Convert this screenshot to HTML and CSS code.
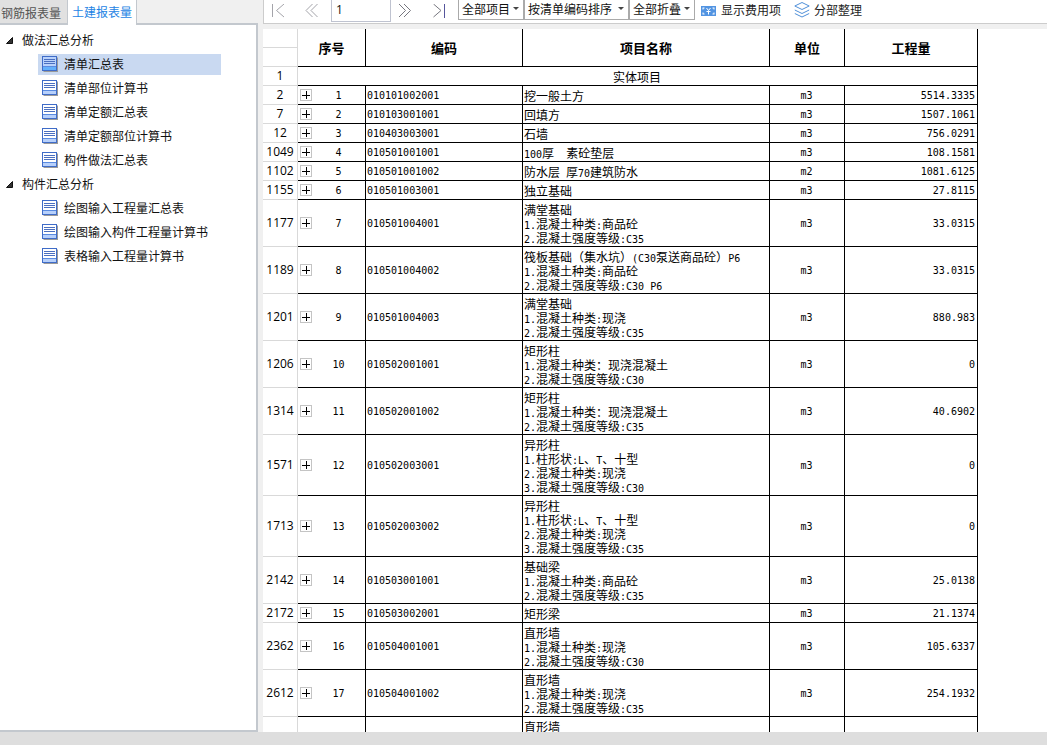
FILE: index.html
```html
<!DOCTYPE html>
<html lang="zh-CN">
<head>
<meta charset="utf-8">
<title>土建报表量</title>
<link rel="stylesheet" href="styles.css">
</head>
<body>
<svg class="defs" aria-hidden="true">
  <symbol id="sheet" viewBox="0 0 16 16">
    <path d="M15 1.500h1V16H1.500v-1H15z" fill="#9a9a9a"/>
    <rect x=".5" y=".5" width="14" height="14" class="sheet-body"/>
    <rect x="1" y="11" width="13" height="3" class="sheet-foot"/>
    <path d="M2 3.500h11M2 5.500h11M2 7.500h11" stroke="#4a6fc0" fill="none"/>
    <path d="M1 10.500h13" stroke="#5a8be0" fill="none"/>
  </symbol>
</svg>
<div class="app">
  <div class="workspace">
    <aside class="sidebar">
      <div class="tabs" role="tablist">
        <button class="tab" role="tab" aria-selected="false">钢筋报表量</button>
        <button class="tab tab-active" role="tab" aria-selected="true">土建报表量</button>
      </div>
      <nav class="tree">
        <button class="group"><svg class="arrow" viewBox="0 0 7 7"><path d="M6.500.5v6H.5z"/></svg>做法汇总分析</button>
        <ul class="items">
          <li><a class="item item-current" href="#"><svg class="sheet"><use href="#sheet"/></svg>清单汇总表</a></li>
          <li><a class="item" href="#"><svg class="sheet"><use href="#sheet"/></svg>清单部位计算书</a></li>
          <li><a class="item" href="#"><svg class="sheet"><use href="#sheet"/></svg>清单定额汇总表</a></li>
          <li><a class="item" href="#"><svg class="sheet"><use href="#sheet"/></svg>清单定额部位计算书</a></li>
          <li><a class="item" href="#"><svg class="sheet"><use href="#sheet"/></svg>构件做法汇总表</a></li>
        </ul>
        <button class="group"><svg class="arrow" viewBox="0 0 7 7"><path d="M6.500.5v6H.5z"/></svg>构件汇总分析</button>
        <ul class="items">
          <li><a class="item" href="#"><svg class="sheet"><use href="#sheet"/></svg>绘图输入工程量汇总表</a></li>
          <li><a class="item" href="#"><svg class="sheet"><use href="#sheet"/></svg>绘图输入构件工程量计算书</a></li>
          <li><a class="item" href="#"><svg class="sheet"><use href="#sheet"/></svg>表格输入工程量计算书</a></li>
        </ul>
      </nav>
    </aside>
    <main class="main">
      <div class="toolbar">
        <div class="pager">
          <button class="nav nav-off" aria-label="首页"><svg viewBox="0 0 14 14"><path d="M1.500 0v13M13 0L5.500 6.500 13 13"/></svg></button>
          <button class="nav nav-off" aria-label="上一页"><svg viewBox="0 0 14 14"><path d="M7.500 0L1 6.500 7.500 13M12.500 0L6 6.500l6.500 6.500"/></svg></button>
          <input class="page" type="text" value="1" aria-label="页码">
          <button class="nav" aria-label="下一页"><svg viewBox="0 0 14 14"><path d="M1 0l6.500 6.500L1 13M6 0l6.500 6.500L6 13"/></svg></button>
          <button class="nav" aria-label="末页"><svg viewBox="0 0 14 14"><path d="M1.500 0L9 6.500 1.500 13"/><path class="bar" d="M12.500 0v14"/></svg></button>
        </div>
        <div class="filters">
          <span class="drop"><select aria-label="项目范围"><option>全部项目</option></select></span>
          <span class="drop drop-wide"><select aria-label="排序方式"><option>按清单编码排序</option></select></span>
          <span class="drop"><select aria-label="折叠方式"><option>全部折叠</option></select></span>
        </div>
        <button class="tool"><svg class="tool-icon" viewBox="0 0 16 16"><path fill="#5294e2" d="M0 4h15v10H0z"/><path stroke="#fff" fill="none" d="M5.500 6L7.500 8.500 9.500 6M5.500 9.500h4M7.500 8.500V12.500"/><path fill="#fff" d="M1.500 5.500h2v1h-1v1h-1zM13.500 5.500h-2v1h1v1h1zM1.500 12.500h2v-1h-1v-1h-1zM13.500 12.500h-2v-1h1v-1h1z"/></svg>显示费用项</button>
        <button class="tool"><svg class="tool-icon" viewBox="0 0 16 16"><g fill="none" stroke="#4f8fd8"><path d="M8 .5l7.200 3.500L8 7.500.8 4z"/><path d="M.8 8L8 11.500 15.200 8M.8 11.500L8 15l7.200-3.500"/></g></svg>分部整理</button>
      </div>
      <div class="report">
        <table class="sheet-table">
          <colgroup><col class="c-row"><col class="c-seq"><col class="c-code"><col class="c-name"><col class="c-unit"><col class="c-qty"></colgroup>
          <thead>
            <tr><td class="rh"></td><th rowspan="2">序号</th><th rowspan="2">编码</th><th rowspan="2">项目名称</th><th rowspan="2">单位</th><th rowspan="2">工程量</th></tr>
            <tr><td class="rh"></td></tr>
          </thead>
          <tbody>
            <tr><td class="rh">1</td><td class="section" colspan="5">实体项目</td></tr>
            <tr><td class="rh">2</td><td class="seq"><div><button aria-label="展开"></button><span>1</span></div></td><td class="code">010101002001</td><td class="name">挖一般土方</td><td class="unit">m3</td><td class="qty">5514.3335</td></tr>
            <tr><td class="rh">7</td><td class="seq"><div><button aria-label="展开"></button><span>2</span></div></td><td class="code">010103001001</td><td class="name">回填方</td><td class="unit">m3</td><td class="qty">1507.1061</td></tr>
            <tr><td class="rh">12</td><td class="seq"><div><button aria-label="展开"></button><span>3</span></div></td><td class="code">010403003001</td><td class="name">石墙</td><td class="unit">m3</td><td class="qty">756.0291</td></tr>
            <tr><td class="rh">1049</td><td class="seq"><div><button aria-label="展开"></button><span>4</span></div></td><td class="code">010501001001</td><td class="name"><i>100</i>厚<i>  </i>素砼垫层</td><td class="unit">m3</td><td class="qty">108.1581</td></tr>
            <tr><td class="rh">1102</td><td class="seq"><div><button aria-label="展开"></button><span>5</span></div></td><td class="code">010501001002</td><td class="name">防水层<i> </i>厚<i>70</i>建筑防水</td><td class="unit">m2</td><td class="qty">1081.6125</td></tr>
            <tr><td class="rh">1155</td><td class="seq"><div><button aria-label="展开"></button><span>6</span></div></td><td class="code">010501003001</td><td class="name">独立基础</td><td class="unit">m3</td><td class="qty">27.8115</td></tr>
            <tr><td class="rh">1177</td><td class="seq"><div><button aria-label="展开"></button><span>7</span></div></td><td class="code">010501004001</td><td class="name">满堂基础<br><i>1.</i>混凝土种类<i>:</i>商品砼<br><i>2.</i>混凝土强度等级<i>:C35</i></td><td class="unit">m3</td><td class="qty">33.0315</td></tr>
            <tr><td class="rh">1189</td><td class="seq"><div><button aria-label="展开"></button><span>8</span></div></td><td class="code">010501004002</td><td class="name">筏板基础（集水坑）<i>(C30</i>泵送商品砼）<i>P6</i><br><i>1.</i>混凝土种类<i>:</i>商品砼<br><i>2.</i>混凝土强度等级<i>:C30 P6</i></td><td class="unit">m3</td><td class="qty">33.0315</td></tr>
            <tr><td class="rh">1201</td><td class="seq"><div><button aria-label="展开"></button><span>9</span></div></td><td class="code">010501004003</td><td class="name">满堂基础<br><i>1.</i>混凝土种类<i>:</i>现浇<br><i>2.</i>混凝土强度等级<i>:C35</i></td><td class="unit">m3</td><td class="qty">880.983</td></tr>
            <tr><td class="rh">1206</td><td class="seq"><div><button aria-label="展开"></button><span>10</span></div></td><td class="code">010502001001</td><td class="name">矩形柱<br><i>1.</i>混凝土种类：现浇混凝土<br><i>2.</i>混凝土强度等级<i>:C30</i></td><td class="unit">m3</td><td class="qty">0</td></tr>
            <tr><td class="rh">1314</td><td class="seq"><div><button aria-label="展开"></button><span>11</span></div></td><td class="code">010502001002</td><td class="name">矩形柱<br><i>1.</i>混凝土种类：现浇混凝土<br><i>2.</i>混凝土强度等级<i>:C35</i></td><td class="unit">m3</td><td class="qty">40.6902</td></tr>
            <tr><td class="rh">1571</td><td class="seq"><div><button aria-label="展开"></button><span>12</span></div></td><td class="code">010502003001</td><td class="name">异形柱<br><i>1.</i>柱形状<i>:L</i>、<i>T</i>、十型<br><i>2.</i>混凝土种类<i>:</i>现浇<br><i>3.</i>混凝土强度等级<i>:C30</i></td><td class="unit">m3</td><td class="qty">0</td></tr>
            <tr><td class="rh">1713</td><td class="seq"><div><button aria-label="展开"></button><span>13</span></div></td><td class="code">010502003002</td><td class="name">异形柱<br><i>1.</i>柱形状<i>:L</i>、<i>T</i>、十型<br><i>2.</i>混凝土种类<i>:</i>现浇<br><i>3.</i>混凝土强度等级<i>:C35</i></td><td class="unit">m3</td><td class="qty">0</td></tr>
            <tr><td class="rh">2142</td><td class="seq"><div><button aria-label="展开"></button><span>14</span></div></td><td class="code">010503001001</td><td class="name">基础梁<br><i>1.</i>混凝土种类<i>:</i>商品砼<br><i>2.</i>混凝土强度等级<i>:C35</i></td><td class="unit">m3</td><td class="qty">25.0138</td></tr>
            <tr><td class="rh">2172</td><td class="seq"><div><button aria-label="展开"></button><span>15</span></div></td><td class="code">010503002001</td><td class="name">矩形梁</td><td class="unit">m3</td><td class="qty">21.1374</td></tr>
            <tr><td class="rh">2362</td><td class="seq"><div><button aria-label="展开"></button><span>16</span></div></td><td class="code">010504001001</td><td class="name">直形墙<br><i>1.</i>混凝土种类<i>:</i>现浇<br><i>2.</i>混凝土强度等级<i>:C30</i></td><td class="unit">m3</td><td class="qty">105.6337</td></tr>
            <tr><td class="rh">2612</td><td class="seq"><div><button aria-label="展开"></button><span>17</span></div></td><td class="code">010504001002</td><td class="name">直形墙<br><i>1.</i>混凝土种类<i>:</i>现浇<br><i>2.</i>混凝土强度等级<i>:C35</i></td><td class="unit">m3</td><td class="qty">254.1932</td></tr>
            <tr class="partial"><td class="rh"></td><td></td><td></td><td class="name">直形墙</td><td></td><td></td></tr>
          </tbody>
        </table>
      </div>
    </main>
  </div>
  <footer class="status"></footer>
</div>
</body>
</html>
```
FILE: styles.css
```css
* { box-sizing: border-box; }
body, ul { margin: 0; padding: 0; }
body, button, input, select {
  font: 12px/16px "Noto Sans CJK SC", sans-serif;
  color: #111;
}
button { border: 0; padding: 0; background: none; white-space: nowrap; }
.defs { display: none; }

.app { display: flex; flex-direction: column; height: 100vh; overflow: hidden; background: #f0f0f0; }
.workspace { display: flex; gap: 5px; flex: 1; min-height: 0; }
.status { flex: none; height: 13px; background: #dedede; }

/* sidebar */
.sidebar { display: flex; flex-direction: column; flex: none; width: 258px; }
.tabs { display: flex; flex: none; height: 23px; }
.tab { width: 67px; height: 23px; padding: 2px 0 0 1px; text-align: left; background: #e1e1e1; color: #555; }
.tab-active {
  position: relative;
  width: 70px;
  height: 25px;
  padding: 0 0 2px 4px;
  border: solid #c3c8ce;
  border-width: 0 1px;
  background: #fff;
  color: #1e84e4;
}
.tree { flex: 1; padding-top: 3px; background: #fff; border: solid #c3c8ce; border-width: 2px 2px 2px 0; }
.group { display: flex; align-items: center; gap: 9px; width: 100%; height: 24px; padding-left: 6px; }
.arrow { width: 7px; height: 7px; fill: #333; stroke: #111; }
.items { list-style: none; padding: 0 35px 0 38px; }
.items li { height: 24px; padding-top: 2px; }
.item { display: flex; align-items: center; gap: 6px; height: 21px; padding: 0 0 2px 4px; color: #111; text-decoration: none; white-space: nowrap; }
.item-current { background: #c9d9f1; }
.sheet { flex: none; width: 16px; height: 16px; --body: #fff; --foot: #b7d0fb; }
.item-current .sheet { --body: #b9d2fb; --foot: #63b0fb; }
.sheet-body { fill: var(--body); stroke: #3f6cc8; }
.sheet-foot { fill: var(--foot); }

/* toolbar */
.main { display: flex; flex-direction: column; gap: 5px; flex: 1; min-width: 0; }
.toolbar { display: flex; align-items: flex-start; flex: none; height: 24px; background: #fff; border: solid #ccc; border-width: 0 0 1px 1px; }
.pager { display: flex; padding-left: 7px; margin-right: 6px; }
.nav { width: 20px; height: 20px; }
.nav + .nav { margin-left: 14px; }
.nav svg { display: block; width: 14px; height: 14px; margin-top: 2px; fill: none; stroke: #77777f; }
.nav-off svg { stroke: #a4a4aa; }
.nav .bar { stroke: #55559c; }
.page { width: 60px; height: 22px; margin: 0 7px 0 6px; padding: 0 4px 2px; border: 1px solid #bfc3d0; border-top: 0; background: #fff; font-family: "Open Sans", sans-serif; }
.filters { display: flex; }
.drop { position: relative; width: 66px; height: 20px; border: solid #aaa; border-width: 0 1px 1px; }
.drop-wide { width: 105px; }
.drop::after { content: ""; position: absolute; right: 4px; top: 7px; border: 3px solid transparent; border-top-color: #444; border-bottom: 0; pointer-events: none; }
.drop select { appearance: none; width: 100%; height: 18px; padding: 0 0 0 3px; border: 0; background: transparent; }
.tool { display: flex; align-items: center; gap: 4px; height: 19px; margin-left: 6px; color: #222; }
.tool + .tool { margin-left: 13px; }
.tool-icon { flex: none; width: 16px; height: 16px; }

/* report */
.report { flex: 1; min-height: 0; overflow: hidden; background: #fff; }
.sheet-table { table-layout: fixed; width: 715px; border-collapse: separate; border-spacing: 0; color: #000; }
.c-row { width: 35px; }
.c-seq { width: 68px; }
.c-code { width: 157px; }
.c-name { width: 247px; }
.c-unit { width: 75px; }
.c-qty { width: 133px; }
.sheet-table tr { height: 19px; }
.sheet-table th, .sheet-table td {
  padding: 3px 2px 1px 1px;
  border: solid #000;
  border-width: 0 1px 1px 0;
  font-size: 12px;
  line-height: 14px;
  white-space: pre;
}
.sheet-table th { padding: 1px 2px; font-size: 13px; font-weight: 700; }
.sheet-table .rh { padding: 1px 0; border-color: #d9d9d9; font: 12px/16px "Open Sans", sans-serif; text-align: center; }
.sheet-table .section, .sheet-table .unit { text-align: center; }
.sheet-table .qty { text-align: right; }
.sheet-table .seq, .sheet-table .code, .sheet-table .unit, .sheet-table .qty, .name i {
  font-family: "DejaVu Sans Mono", monospace;
  font-size: 10px;
  font-style: normal;
}
.name i { line-height: 0; }
.sheet-table .seq { padding: 1px 0 1px 2px; }
.seq div { display: flex; align-items: center; }
.seq span { flex: 1; padding-top: 2px; text-align: center; }
.seq button {
  width: 12px;
  height: 12px;
  border: 1px solid #c4c4c4;
  background:
    linear-gradient(#000, #000) center / 8px 1px no-repeat,
    linear-gradient(#000, #000) center / 1px 8px no-repeat;
}
.sheet-table .partial { height: 47px; vertical-align: top; }
```
